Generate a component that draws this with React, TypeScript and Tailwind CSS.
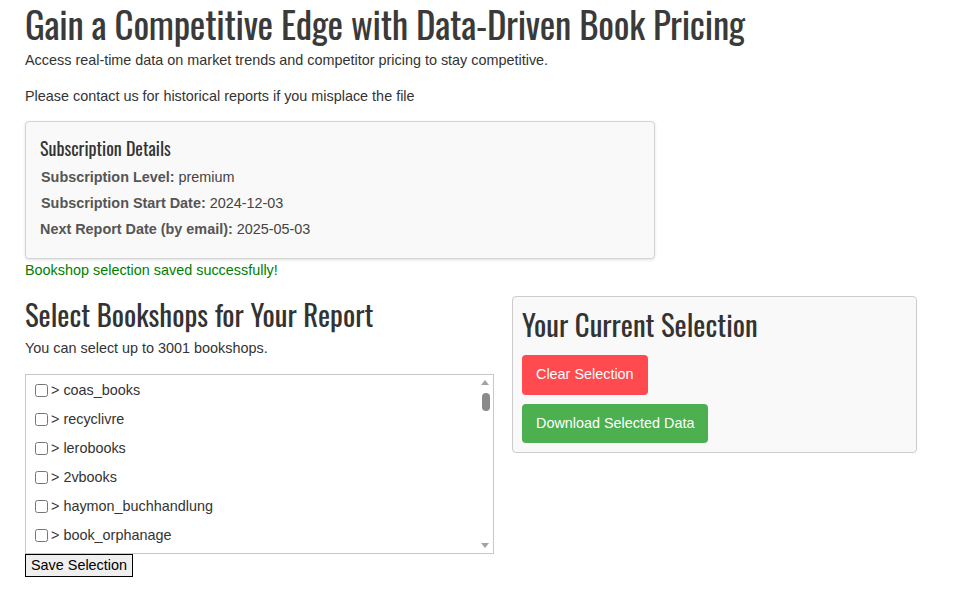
import { useState } from 'react';

const shops = [
  'coas_books',
  'recyclivre',
  'lerobooks',
  '2vbooks',
  'haymon_buchhandlung',
  'book_orphanage',
  'librairie_gallimard',
];

const head = "font-['Oswald','Liberation_Sans_Narrow','DejaVu_Sans_Condensed',sans-serif]";

export default function App() {
  const [checked, setChecked] = useState<Record<string, boolean>>({});
  return (
    <div className="min-h-[590px] bg-white px-[25px] text-[14.4px] text-[#333] font-['Liberation_Sans',Arial,sans-serif]">
      <h1 className={`${head} pt-[2px] text-[37px] leading-[44px] text-[#3a3a3a] tracking-[-0.3px]`}>
        Gain a Competitive Edge with Data-Driven Book Pricing
      </h1>
      <p className="mt-[6px] leading-[16px]">Access real-time data on market trends and competitor pricing to stay competitive.</p>
      <p className="mt-[20px] leading-[16px]">Please contact us for historical reports if you misplace the file</p>

      <div className="mt-[17px] w-[630px] h-[138px] rounded-[4px] border border-[#d4d4d4] bg-[#f9f9f9] px-[14px] pt-[13px] shadow-[0_1px_3px_rgba(0,0,0,0.12)]">
        <h3 className={`${head} text-[18px] leading-[26px] text-[#333]`}>Subscription Details</h3>
        <div className="mt-[8px] flex flex-col gap-[10px] text-[#444] leading-[16px]">
          <p className="pl-px"><b className="text-[#555]">Subscription Level:</b> premium</p>
          <p className="pl-px"><b className="text-[#555]">Subscription Start Date:</b> 2024-12-03</p>
          <p><b className="text-[#555]">Next Report Date (by email):</b> 2025-05-03</p>
        </div>
      </div>

      <p className="mt-[3px] leading-[16px] text-[#008000]">Bookshop selection saved successfully!</p>

      <div className="flex items-start gap-[18px]">
        <div className="w-[469px]">
          <h2 className={`${head} mt-[17px] text-[28.8px] leading-[38px] text-[#333]`}>Select Bookshops for Your Report</h2>
          <p className="mt-[7px] leading-[16px]">You can select up to 3001 bookshops.</p>
          <div className="relative mt-[18px] h-[180px] overflow-hidden border border-[#c8c8c8] bg-white">
            <ul className="pl-[9px] pt-[6px] flex flex-col">
              {shops.map(s => (
                <li key={s} className="h-[29px] flex items-start leading-[18px]">
                  <input
                    type="checkbox"
                    checked={!!checked[s]}
                    onChange={() => setChecked(c => ({ ...c, [s]: !c[s] }))}
                    className="mt-[3px] mr-[3px] h-[13px] w-[13px]"
                  />
                  <span>&gt; {s}</span>
                </li>
              ))}
            </ul>
            <div className="absolute right-0 top-0 bottom-0 w-[15px] bg-white">
              <div className="absolute left-[3px] top-[5px] h-0 w-0 border-x-[4px] border-b-[5px] border-x-transparent border-b-[#a3a3a3]" />
              <div className="absolute left-[4px] top-[18px] h-[18px] w-[8px] rounded-full bg-[#8a8a8a]" />
              <div className="absolute left-[3px] bottom-[5px] h-0 w-0 border-x-[4px] border-t-[5px] border-x-transparent border-t-[#a3a3a3]" />
            </div>
          </div>
          <button className="block h-[23px] border border-black bg-[#efefef] px-[5px] text-[14.4px] text-black leading-[19px]">
            Save Selection
          </button>
        </div>

        <div className="mt-[18px] w-[405px] h-[157px] rounded-[4px] border border-[#ccc] bg-[#f9f9f9] px-[9px] pt-[8px]">
          <h2 className={`${head} text-[28.8px] leading-[38px] text-[#333]`}>Your Current Selection</h2>
          <div className="mt-[12px] flex flex-col items-start gap-[9px]">
            <button
              onClick={() => setChecked({})}
              className="h-[40px] rounded-[4px] bg-[#ff4a4f] px-[14px] text-[14.4px] text-white"
            >
              Clear Selection
            </button>
            <button className="h-[39px] rounded-[4px] bg-[#4caf50] px-[14px] text-[14.4px] text-white">
              Download Selected Data
            </button>
          </div>
        </div>
      </div>
    </div>
  );
}
